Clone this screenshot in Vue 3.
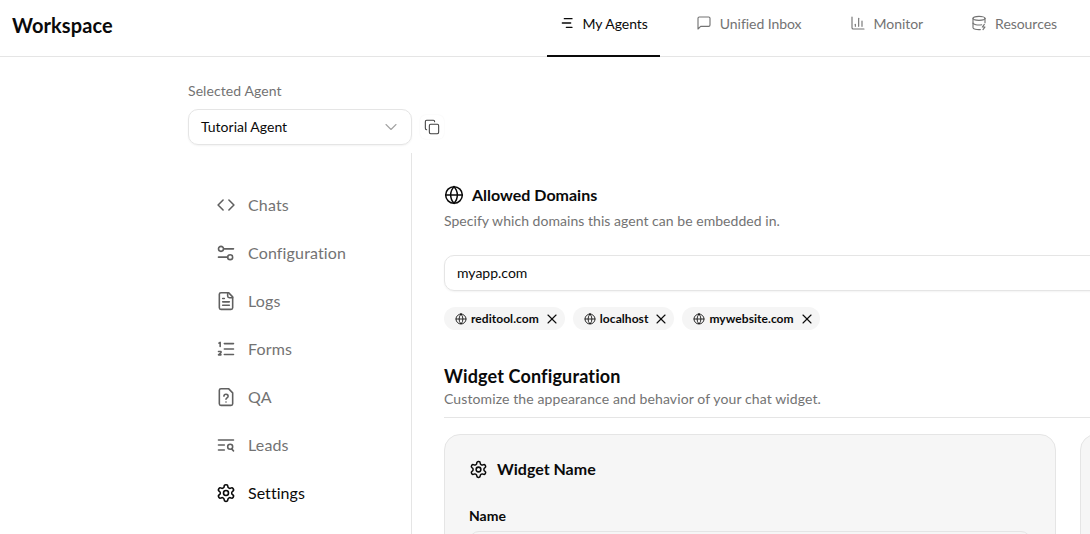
<script setup>
const tabs = [
  { label: 'My Agents', icon: 'agents', active: true },
  { label: 'Unified Inbox', icon: 'inbox' },
  { label: 'Monitor', icon: 'monitor' },
  { label: 'Resources', icon: 'resources' },
]
const menu = [
  { label: 'Chats', icon: 'code' },
  { label: 'Configuration', icon: 'config' },
  { label: 'Logs', icon: 'logs' },
  { label: 'Forms', icon: 'forms' },
  { label: 'QA', icon: 'qa' },
  { label: 'Leads', icon: 'leads' },
  { label: 'Settings', icon: 'gear', active: true },
]
const chips = ['reditool.com', 'localhost', 'mywebsite.com']
const paths = {
  agents: ['M8 5.500h11.500', 'M5 12h12.500', 'M11 18.500h8.500'],
  inbox: ['M21 15a2 2 0 0 1-2 2H7l-4 4V5a2 2 0 0 1 2-2h14a2 2 0 0 1 2 2z'],
  monitor: ['M3 3v16a2 2 0 0 0 2 2h16', 'M18 17V9', 'M13 17V5', 'M8 17v-3'],
  resources: ['M21 11.500V5', 'M3 5v14a9 3 0 0 0 11 2.900', 'M3 12a9 3 0 0 0 13 2.700', 'M12 8a9 3 0 1 0 0-6 9 3 0 0 0 0 6z', 'M20 14l-3 4h4l-3 4'],
  code: ['M8.500 6l-6 6 6 6', 'M15.500 6l6 6-6 6'],
  config: ['M14 17H3', 'M21 7H10', 'M17 14a3 3 0 1 0 0 6 3 3 0 0 0 0-6z', 'M6 4a3 3 0 1 0 0 6 3 3 0 0 0 0-6z'],
  logs: ['M15 2H6a2 2 0 0 0-2 2v16a2 2 0 0 0 2 2h12a2 2 0 0 0 2-2V7z', 'M14 2v4a2 2 0 0 0 2 2h4', 'M10 9H8', 'M16 13H8', 'M16 17H8'],
  forms: ['M10 5.500h11', 'M10 12h11', 'M10 18.500h11', 'M3.500 5l1.500-1v5', 'M3 15h3v1.500L3 19h3'],
  qa: ['M15 2H6a2 2 0 0 0-2 2v16a2 2 0 0 0 2 2h12a2 2 0 0 0 2-2V7z', 'M9.500 11a2.500 2.500 0 0 1 5 .3c0 1.700-2.500 1.900-2.500 3.400', 'M12 18h.01'],
  leads: ['M21 6H3', 'M10 12H3', 'M10 18H3', 'M17 11a3 3 0 1 0 0 6 3 3 0 0 0 0-6z', 'M21 19l-2-2'],
  gear: ['M12.220 2h-.44a2 2 0 0 0-2 2v.18a2 2 0 0 1-1 1.730l-.43.25a2 2 0 0 1-2 0l-.15-.08a2 2 0 0 0-2.730.73l-.22.38a2 2 0 0 0 .73 2.730l.15.1a2 2 0 0 1 1 1.720v.51a2 2 0 0 1-1 1.740l-.15.09a2 2 0 0 0-.73 2.730l.22.38a2 2 0 0 0 2.730.73l.15-.08a2 2 0 0 1 2 0l.43.25a2 2 0 0 1 1 1.730V20a2 2 0 0 0 2 2h.44a2 2 0 0 0 2-2v-.18a2 2 0 0 1 1-1.730l.43-.25a2 2 0 0 1 2 0l.15.08a2 2 0 0 0 2.730-.73l.22-.39a2 2 0 0 0-.73-2.730l-.15-.08a2 2 0 0 1-1-1.740v-.5a2 2 0 0 1 1-1.740l.15-.09a2 2 0 0 0 .73-2.730l-.22-.38a2 2 0 0 0-2.730-.73l-.15.08a2 2 0 0 1-2 0l-.43-.25a2 2 0 0 1-1-1.730V4a2 2 0 0 0-2-2z', 'M12 9a3 3 0 1 0 0 6 3 3 0 0 0 0-6z'],
  globe: ['M12 2a10 10 0 1 0 0 20 10 10 0 0 0 0-20z', 'M12 2a14.500 14.500 0 0 0 0 20 14.500 14.500 0 0 0 0-20', 'M2 12h20'],
  close: ['M4 4l16 16', 'M20 4L4 20'],
  chevron: ['M6 9l6 6 6-6'],
  copy: ['M10 8h10a2 2 0 0 1 2 2v10a2 2 0 0 1-2 2H10a2 2 0 0 1-2-2V10a2 2 0 0 1 2-2z', 'M4 16c-1.100 0-2-.9-2-2V4c0-1.100.9-2 2-2h10c1.100 0 2 .9 2 2'],
}
</script>

<template>
  <div class="page">
    <header class="topbar">
      <div class="logo">Workspace</div>
      <nav class="tabs">
        <a v-for="t in tabs" :key="t.label" class="tab" :class="{ active: t.active }">
          <svg class="tab-icon" viewBox="0 0 24 24"><path v-for="d in paths[t.icon]" :key="d" :d="d" /></svg>
          <span>{{ t.label }}</span>
        </a>
      </nav>
    </header>

    <div class="body">
      <div class="agent-block">
        <div class="agent-label">Selected Agent</div>
        <div class="agent-row">
          <div class="select">
            <span>Tutorial Agent</span>
            <svg class="chev" viewBox="0 0 24 24"><path v-for="d in paths.chevron" :key="d" :d="d" /></svg>
          </div>
          <button class="copy">
            <svg viewBox="0 0 24 24"><path v-for="d in paths.copy" :key="d" :d="d" /></svg>
          </button>
        </div>
      </div>

      <div class="split">
        <aside class="side">
          <a v-for="m in menu" :key="m.label" class="item" :class="{ active: m.active }">
            <svg viewBox="0 0 24 24"><path v-for="d in paths[m.icon]" :key="d" :d="d" /></svg>
            <span>{{ m.label }}</span>
          </a>
        </aside>

        <main class="content">
          <h2 class="domains-title">
            <svg viewBox="0 0 24 24"><path v-for="d in paths.globe" :key="d" :d="d" /></svg>
            Allowed Domains
          </h2>
          <p class="desc domains-desc">Specify which domains this agent can be embedded in.</p>
          <div class="input">myapp.com</div>
          <div class="chips">
            <span v-for="c in chips" :key="c" class="chip">
              <svg class="chip-globe" viewBox="0 0 24 24"><path v-for="d in paths.globe" :key="d" :d="d" /></svg>
              <b>{{ c }}</b>
              <svg class="chip-x" viewBox="0 0 24 24"><path v-for="d in paths.close" :key="d" :d="d" /></svg>
            </span>
          </div>

          <h2 class="widget-title">Widget Configuration</h2>
          <p class="desc widget-desc">Customize the appearance and behavior of your chat widget.</p>
          <div class="cards">
            <section class="card">
              <h3 class="card-title">
                <svg viewBox="0 0 24 24"><path v-for="d in paths.gear" :key="d" :d="d" /></svg>
                Widget Name
              </h3>
              <label class="field-label">Name</label>
              <div class="field"></div>
            </section>
            <section class="card"></section>
          </div>
        </main>
      </div>
    </div>
  </div>
</template>

<style>
html, body { margin: 0; height: 534px; overflow: hidden; background: #fff; }
</style>

<style scoped>
.page {
  width: 1090px;
  height: 534px;
  overflow: hidden;
  font-family: Lato, "Noto Sans", sans-serif;
  color: #0a0a0a;
}
svg { fill: none; stroke: currentColor; stroke-width: 2; stroke-linecap: round; stroke-linejoin: round; display: block; flex: none; }
.topbar {
  height: 56px;
  border-bottom: 1px solid #e5e5e5;
  display: flex;
  align-items: stretch;
  justify-content: space-between;
  padding: 0 21px 0 12px;
}
.logo { font-size: 20px; font-weight: 700; line-height: 50px; letter-spacing: 0.1px; }
.tabs { display: flex; gap: 24px; }
.tab {
  display: flex;
  align-items: center;
  gap: 8px;
  padding: 0 12px 9px;
  margin-bottom: -1px;
  font-size: 14px;
  letter-spacing: -0.05px;
  color: #737373;
  border-bottom: 2px solid transparent;
  box-sizing: border-box;
}
.tab.active { color: #0a0a0a; border-bottom-color: #0a0a0a; }
.tab-icon { width: 16px; height: 16px; stroke-width: 1.7; }
.tab.active .tab-icon { stroke-width: 2; }
.body { padding-left: 188px; }
.agent-block { padding-top: 25px; }
.agent-label { font-size: 14px; line-height: 17px; color: #737373; letter-spacing: 0.08px; }
.agent-row { margin-top: 10px; display: flex; align-items: center; gap: 8px; }
.select {
  width: 224px;
  height: 36px;
  box-sizing: border-box;
  border: 1px solid #e5e5e5;
  border-radius: 10px;
  box-shadow: 0 1px 2px rgba(0, 0, 0, 0.05);
  padding: 0 10px 2px 12px;
  display: flex;
  align-items: center;
  justify-content: space-between;
  font-size: 14px;
}
.chev { width: 20px; height: 20px; color: #a3a3a3; stroke-width: 1.3; margin-top: 2px; }
.copy {
  width: 24px;
  height: 24px;
  padding: 4px;
  border: 0;
  border-radius: 6px;
  background: #fff;
  box-shadow: 0 0 2px rgba(0, 0, 0, 0.06);
  color: #404040;
  display: grid;
  place-items: center;
}
.copy svg { width: 16px; height: 16px; stroke-width: 1.6; }
.split { margin-top: 8px; display: flex; align-items: stretch; height: 381px; }
.side {
  width: 224px;
  flex: none;
  box-sizing: border-box;
  border-right: 1px solid #e5e5e5;
  padding: 28px 0 0 28px;
  display: flex;
  flex-direction: column;
}
.item {
  height: 48px;
  display: flex;
  align-items: center;
  gap: 12px;
  font-size: 16px;
  letter-spacing: 0.15px;
  color: #737373;
}
.item span { margin-top: -2px; }
.item svg { width: 20px; height: 20px; color: #606060; stroke-width: 1.9; }
.item.active { color: #0a0a0a; letter-spacing: 0.05px; }
.item.active svg { color: #0a0a0a; }
.content { flex: none; width: 800px; padding: 32px 0 0 32px; }
.domains-title {
  margin: 0;
  display: flex;
  align-items: center;
  gap: 8px;
  font-size: 16px;
  line-height: 20px;
  font-weight: 700;
}
.domains-title svg { width: 20px; height: 20px; stroke-width: 1.8; }
.desc { margin: 0; font-size: 14px; line-height: 17px; color: #737373; }
.domains-desc { margin-top: 7px; letter-spacing: 0.04px; }
.input {
  margin-top: 26px;
  height: 36px;
  box-sizing: border-box;
  border: 1px solid #e5e5e5;
  border-radius: 10px;
  box-shadow: 0 1px 2px rgba(0, 0, 0, 0.05);
  padding: 0 12px 2px;
  display: flex;
  align-items: center;
  font-size: 14px;
}
.chips { margin-top: 16px; display: flex; gap: 8px; }
.chip {
  height: 23px;
  border-radius: 12px;
  background: #f5f5f5;
  padding: 0 7px 0 11px;
  display: flex;
  align-items: center;
  font-size: 12px;
}
.chip b { font-weight: 700; margin: 0 7px 0 4px; letter-spacing: 0.05px; }
.chip-globe { width: 12px; height: 12px; stroke-width: 1.7; }
.chip-x { width: 12px; height: 12px; stroke-width: 2.2; }
.widget-title { margin: 35px 0 0; font-size: 18px; line-height: 22px; font-weight: 700; letter-spacing: 0.15px; }
.widget-desc { margin-top: 3px; padding-bottom: 10px; border-bottom: 1px solid #e5e5e5; letter-spacing: 0.11px; }
.cards { margin-top: 16px; display: grid; grid-template-columns: 612px 612px; gap: 24px; }
.card {
  height: 200px;
  box-sizing: border-box;
  border: 1px solid #e5e5e5;
  border-radius: 16px;
  background: #f6f6f6;
  padding: 24px;
}
.card-title {
  margin: 0;
  display: flex;
  align-items: center;
  gap: 9px;
  font-size: 16px;
  line-height: 20px;
  font-weight: 700;
}
.card-title svg { width: 19px; height: 19px; stroke-width: 1.9; }
.field-label { display: block; margin-top: 28px; font-size: 14px; line-height: 17px; font-weight: 700; }
.field {
  margin-top: 7px;
  height: 36px;
  border: 1px solid #e5e5e5;
  border-radius: 10px;
  background: #f6f6f6;
}
</style>
